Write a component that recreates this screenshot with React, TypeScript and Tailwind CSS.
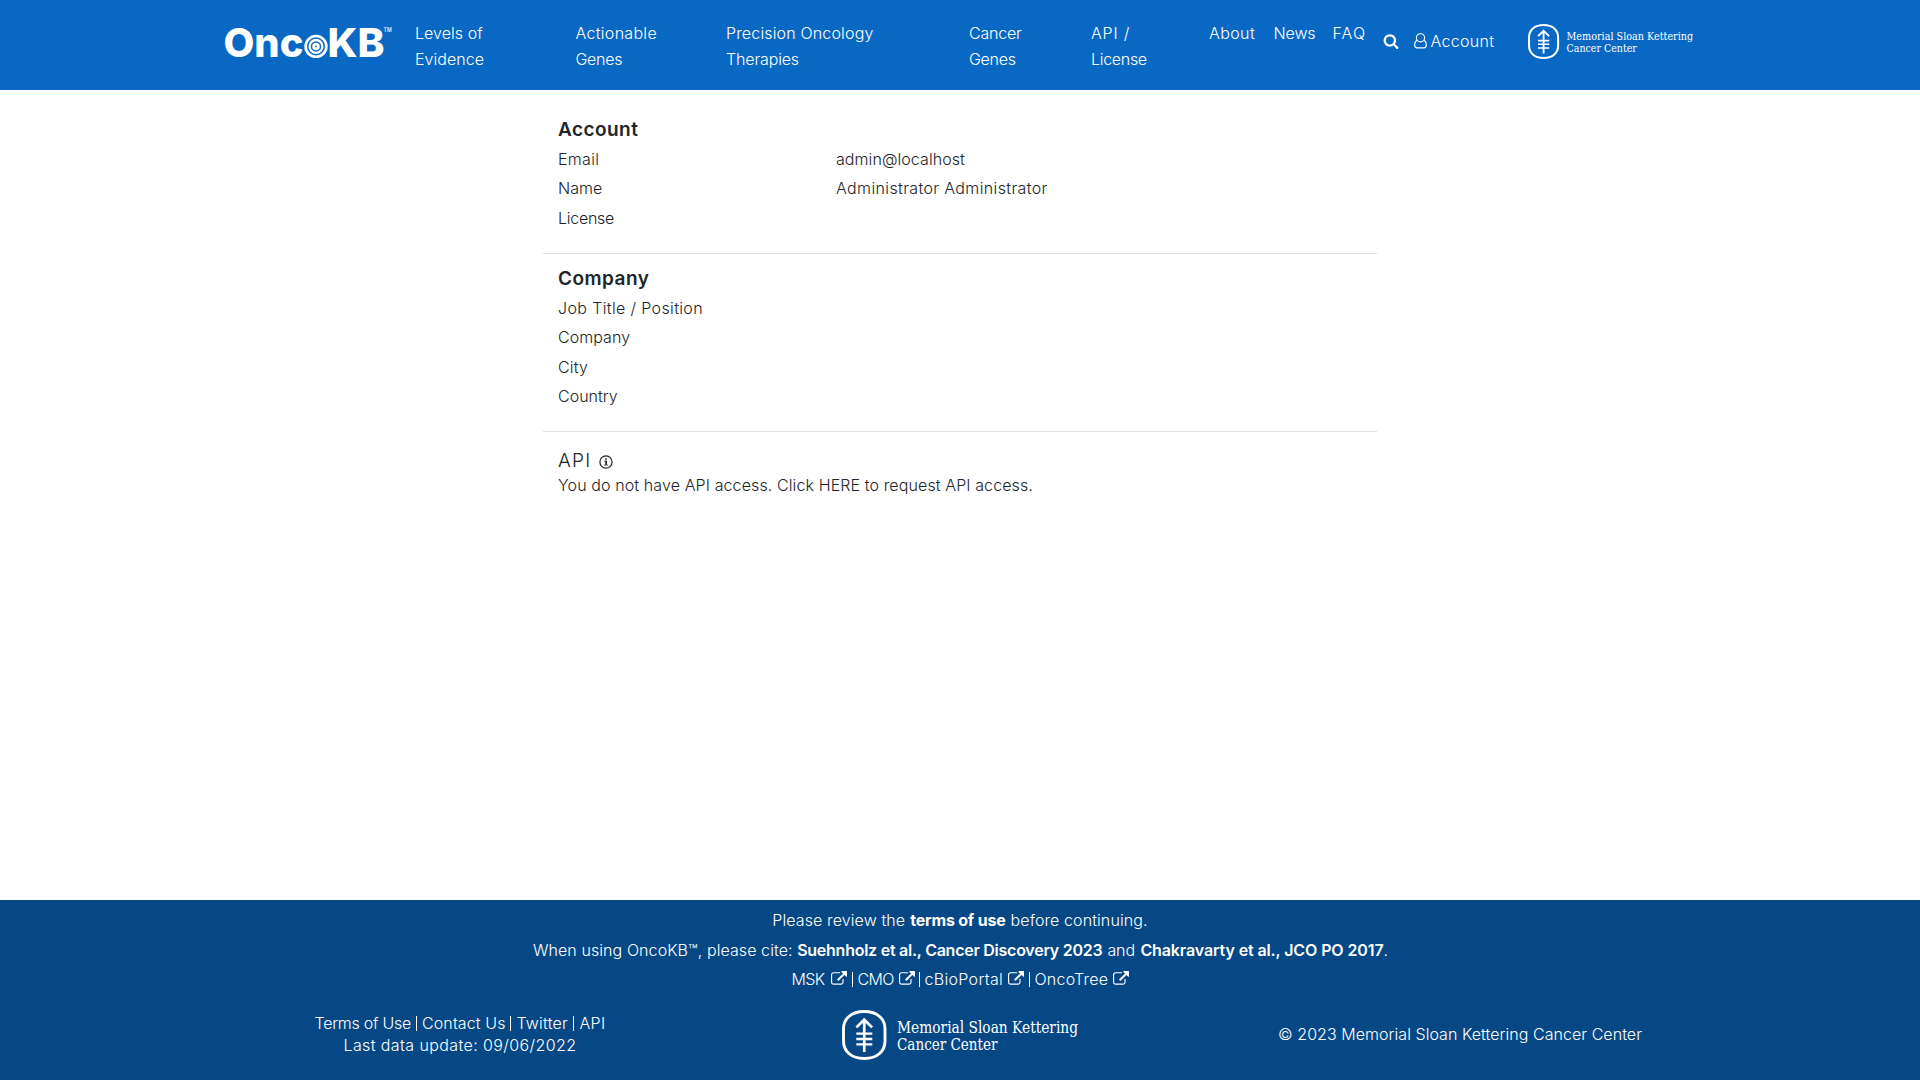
import React from "react";

function OncoLogo() {
  return (
    <svg width="180" height="60" viewBox="-6 -12 180 60" className="-mt-3 -ml-1.5 -mb-6 block shrink-0" fill="#fff" role="img" aria-label="OncoKB">
      <g fontFamily="Inter, sans-serif" fontWeight="800" fontSize="39.5">
        <text x="-0.5" y="33.2" textLength="80" lengthAdjust="spacingAndGlyphs">Onc</text>
        <text x="103.5" y="33.2" textLength="57" lengthAdjust="spacingAndGlyphs">KB</text>
      </g>
      <circle cx="92" cy="22.4" r="11.7" />
      <g fill="none" stroke="#0968c3" strokeWidth="1.5">
        <circle cx="92" cy="22.4" r="8.3" />
        <circle cx="92" cy="22.4" r="4.5" />
      </g>
      <circle cx="92" cy="22.4" r="0.9" fill="#0968c3" />
      <text x="159.6" y="7.9" fontFamily="Inter, sans-serif" fontWeight="500" fontSize="5.6" textLength="8" lengthAdjust="spacingAndGlyphs">TM</text>
    </svg>
  );
}

function MskLogo({ className }: { className: string }) {
  return (
    <svg viewBox="0 0 242 50" className={className} role="img" aria-label="Memorial Sloan Kettering Cancer Center">
      <g fill="none" stroke="#fff">
        <path
          strokeWidth="2.9"
          d="M22.25 1.5C35.5 1.5 43 9 43 19v12c0 10-7.5 17.5-20.75 17.5S1.5 41 1.5 31V19C1.5 9 9 1.5 22.25 1.5Z"
        />
        <path strokeWidth="2.7" d="M22.25 9v33M14.4 17.4l7.85-7.7 7.85 7.7" />
        <path strokeWidth="2.3" d="M14.3 23.7h16M14.3 29h16M14.3 34.3h16" />
      </g>
      <g fill="#fff" fontFamily='"DejaVu Serif", serif' fontSize="15.8">
        <text x="55" y="23" textLength="181" lengthAdjust="spacingAndGlyphs">Memorial Sloan Kettering</text>
        <text x="55" y="39.7" textLength="100.5" lengthAdjust="spacingAndGlyphs">Cancer Center</text>
      </g>
    </svg>
  );
}

function SearchIcon() {
  return (
    <svg viewBox="0 0 1792 1792" className="block size-4" fill="#fff">
      <path d="M1216 832q0-185-131.5-316.5t-316.5-131.5-316.5 131.5-131.5 316.5 131.5 316.5 316.5 131.5 316.5-131.5 131.5-316.5zm512 832q0 52-38 90t-90 38q-54 0-90-38l-343-342q-179 124-399 124-143 0-273.5-55.5t-225-150-150-225-55.5-273.5 55.5-273.5 150-225 225-150 273.5-55.5 273.5 55.5 225 150 150 225 55.5 273.5q0 220-124 399l343 343q37 37 37 90z" />
    </svg>
  );
}

function UserIcon() {
  return (
    <svg viewBox="0 0 13 16" className="block h-4 w-[13px]" fill="none" stroke="#fff" strokeWidth="1.15">
      <circle cx="6.5" cy="4.8" r="4.1" />
      <path d="M3.3 7.4C1.5 7.9.7 9.6.7 12.1c0 1.8 1 2.8 2.4 2.8h6.8c1.4 0 2.4-1 2.4-2.8 0-2.5-.8-4.2-2.6-4.7" />
    </svg>
  );
}

function InfoIcon() {
  return (
    <svg viewBox="0 0 14 14" className="block size-3.5" fill="none" stroke="#212529">
      <circle cx="7" cy="7" r="6.1" strokeWidth="1.2" />
      <path strokeWidth="1.7" d="M7 3.2v1.6M7.1 5.8v4" />
      <path strokeWidth="1" d="M5.4 6.2h2M5.3 10h3.5" />
    </svg>
  );
}

function ExternalIcon() {
  return (
    <svg viewBox="0 0 1792 1792" className="block h-4 w-4" fill="#fff">
      <path d="M1408 928v320q0 119-84.5 203.5t-203.5 84.5h-832q-119 0-203.5-84.5t-84.5-203.5v-832q0-119 84.5-203.5t203.5-84.5h704q14 0 23 9t9 23v64q0 14-9 23t-23 9h-704q-66 0-113 47t-47 113v832q0 66 47 113t113 47h832q66 0 113-47t47-113v-320q0-14 9-23t23-9h64q14 0 23 9t9 23zm384-864v512q0 26-19 45t-45 19-45-19l-176-176-652 652q-10 10-23 10t-23-10l-114-114q-10-10-10-23t10-23l652-652-176-176q-19-19-19-45t19-45 45-19h512q26 0 45 19t19 45z" />
    </svg>
  );
}

function Bar() {
  return <span className="mt-px block h-[15px] w-px bg-white" />;
}

function Row({ label, labelClass, value, valueClass = "" }: { label: string; labelClass: string; value?: string; valueClass?: string }) {
  return (
    <div className="flex h-[29.6px] px-[15px] leading-6">
      <dt className={`w-[278px] ${labelClass}`}>{label}</dt>
      <dd className={valueClass}>{value}</dd>
    </div>
  );
}

export default function App() {
  return (
    <div className="flex h-[1080px] w-[1920px] flex-col overflow-hidden bg-white font-[Inter,sans-serif] text-base font-light text-[#212529]">
      <header className="h-[90px] bg-[#0968c3] text-white">
        <nav className="flex items-start pl-[224px] leading-[26px]">
          <a className="mt-6 w-[191px]"><OncoLogo /></a>
          <div className="mt-[20px] flex">
            <a className="w-[160.5px]"><span className="tracking-[0.05px]">Levels of</span><br /><span className="tracking-[0.05px]">Evidence</span></a>
            <a className="w-[150.5px]"><span className="tracking-[0.3px]">Actionable</span><br /><span className="tracking-[-0.3px]">Genes</span></a>
            <a className="w-[243px]"><span className="tracking-[0.16px]">Precision Oncology</span><br /><span className="tracking-[-0.15px]">Therapies</span></a>
            <a className="w-[122px]"><span className="tracking-[-0.2px]">Cancer</span><br /><span className="tracking-[-0.3px]">Genes</span></a>
            <a className="w-[118px]"><span className="tracking-[0.8px]">API /</span><br /><span className="tracking-[-0.3px]">License</span></a>
            <a className="w-[64.5px] tracking-[0.4px]">About</a>
            <a className="w-[59px] tracking-[-0.1px]">News</a>
            <a className="w-[50px] tracking-[1.1px]">FAQ</a>
          </div>
          <div className="mt-[33px] w-[31px]"><SearchIcon /></div>
          <a className="mt-7 flex w-[114.5px] gap-1"><span className="mt-[4.5px]"><UserIcon /></span><span className="tracking-[0.3px]">Account</span></a>
          <MskLogo className="mt-6 block h-[35px] w-[169.4px]" />
        </nav>
      </header>

      <main className="mx-auto flex w-[834px] flex-1 flex-col">
        <section className="h-[164px] border-b border-[#dfdfdf] pt-[28px]">
          <h2 className="px-[15px] text-[19px] leading-6 font-semibold tracking-[0.45px]">Account</h2>
          <dl className="mt-[4.5px]">
            <Row label="Email" labelClass="tracking-[0.3px]" value="admin@localhost" valueClass="tracking-[0.07px]" />
            <Row label="Name" labelClass="tracking-[0px]" value="Administrator Administrator" valueClass="tracking-[0.37px]" />
            <Row label="License" labelClass="tracking-[-0.27px]" />
          </dl>
        </section>
        <section className="h-[178px] border-b border-[#dfdfdf] pt-[13px]">
          <h2 className="px-[15px] text-[19px] leading-6 font-semibold tracking-[0.45px]">Company</h2>
          <dl className="mt-[4.5px]">
            <Row label="Job Title / Position" labelClass="tracking-[0.36px]" />
            <Row label="Company" labelClass="tracking-[0.05px]" />
            <Row label="City" labelClass="tracking-[0.13px]" />
            <Row label="Country" labelClass="tracking-[0px]" />
          </dl>
        </section>
        <section className="px-[15px] pt-[17px]">
          <h2 className="flex text-[19px] leading-6 tracking-[1.3px]">
            <span className="w-[41px]">API</span>
            <span className="mt-[5.5px]"><InfoIcon /></span>
          </h2>
          <p className="leading-6 tracking-[0.11px]">You do not have API access. Click <a>HERE</a> to request API access.</p>
        </section>
      </main>

      <footer className="h-[180px] bg-[#064885] text-white">
        <p className="flex h-[30px] justify-center pt-2 leading-6">
          <span className="mr-[5px] tracking-[0.1px]">Please review the</span>
          <a className="mr-[5px] font-bold tracking-[-0.19px]">terms of use</a>
          <span className="tracking-[0.1px]">before continuing.</span>
        </p>
        <p className="flex h-[29px] justify-center pt-2 pl-px leading-6">
          <span className="mr-[4.5px] tracking-[0.08px]">When using OncoKB™, please cite:</span>
          <a className="mr-[5px] font-semibold tracking-[-0.25px]">Suehnholz et al., Cancer Discovery 2023</a>
          <span className="mr-[5.5px] tracking-[-0.1px]">and</span>
          <a className="font-semibold tracking-[-0.11px]">Chakravarty et al., JCO PO 2017</a>
          <span>.</span>
        </p>
        <div className="mt-2 flex h-6 items-center justify-center leading-6">
          <a className="flex w-[60px] items-center justify-between"><span className="tracking-[-0.6px]">MSK</span><span className="w-[20.5px]"><ExternalIcon /></span></a>
          <Bar />
          <a className="ml-[5px] flex w-[61.5px] items-center justify-between"><span className="tracking-[-0.6px]">CMO</span><span className="w-[20.5px]"><ExternalIcon /></span></a>
          <Bar />
          <a className="ml-[4.5px] flex w-[104px] items-center justify-between"><span className="tracking-[0.32px]">cBioPortal</span><span className="w-[21px]"><ExternalIcon /></span></a>
          <Bar />
          <a className="ml-[5px] flex w-[94px] items-center justify-between"><span className="tracking-[0.22px]">OncoTree</span><ExternalIcon /></a>
        </div>
        <div className="mx-auto grid w-[1500px] grid-cols-3 items-center justify-items-center pt-[19px]">
          <div className="-mt-[2px] flex flex-col items-center leading-[22px]">
            <div className="flex items-center">
              <a className="w-[101.5px] tracking-[-0.25px]">Terms of Use</a>
              <Bar />
              <a className="ml-[5px] w-[88.5px] tracking-[0.12px]">Contact Us</a>
              <Bar />
              <a className="ml-[5px] w-[57px] tracking-[0.21px]">Twitter</a>
              <Bar />
              <a className="ml-[5px] tracking-[0.34px]">API</a>
            </div>
            <div className="tracking-[0.4px]">Last data update: 09/06/2022</div>
          </div>
          <MskLogo className="ml-[6px] block h-[50px] w-[242px]" />
          <div className="-mt-[2px] tracking-[0.05px]">© 2023 Memorial Sloan Kettering Cancer Center</div>
        </div>
      </footer>
    </div>
  );
}
